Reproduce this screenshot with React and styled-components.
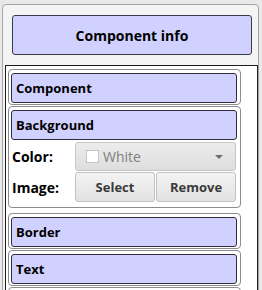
import React from 'react';
import styled, { createGlobalStyle } from 'styled-components';

const GlobalStyle = createGlobalStyle`
  html, body {
    margin: 0;
    padding: 0;
    height: 290px;
    overflow: hidden;
    background: #e9e9e9;
    font-family: "Open Sans", "Noto Sans", "DejaVu Sans", sans-serif;
  }
`;

const Screen = styled.div`
  padding: 4px 0 0 2px;
  height: 286px;
  overflow: hidden;
`;

const Panel = styled.div`
  width: 257px;
  height: 300px;
  box-sizing: border-box;
  border: 1px solid #a4a4a4;
  border-radius: 4px 4px 0 0;
  background: #f4f4f4;
  padding: 10px 0 0 2px;
`;

const TitleBox = styled.div`
  margin-left: 7px;
  width: 240px;
  height: 40px;
  box-sizing: border-box;
  border: 1px solid #3a3a4a;
  border-radius: 3px;
  background: #d1d1ff;
  display: flex;
  align-items: center;
  justify-content: center;
  font-weight: 700;
  font-size: 14px;
  color: #000;
`;

const ScrollBox = styled.div`
  margin-top: 10px;
  width: 253px;
  height: 240px;
  box-sizing: border-box;
  border: 1px solid #1e1e1e;
  background: #fff;
  padding: 3px 0 0 2px;
  display: flex;
  flex-direction: column;
  gap: 1px;
`;

const Section = styled.div`
  width: 233px;
  box-sizing: border-box;
  border: 1px solid #8c8c8c;
  border-radius: 4px;
  padding: 3px 3px ${props => (props.open ? 5 : 1)}px 2px;
  margin-bottom: ${props => (props.open ? 4 : 0)}px;
`;

const SectionHeader = styled.div`
  height: 30px;
  box-sizing: border-box;
  border: 1px solid #2e2e3e;
  border-radius: 3px;
  background: #d1d1ff;
  display: flex;
  align-items: center;
  padding-left: 4px;
  font-weight: 700;
  font-size: 13px;
  color: #000;
`;

const Form = styled.div`
  display: grid;
  grid-template-columns: 64px 161px;
  row-gap: 1px;
  margin-top: 2px;
  align-items: center;
`;

const Label = styled.div`
  font-weight: 700;
  font-size: 14px;
  color: #000;
  padding-left: 1px;
`;

const Combo = styled.div`
  height: 29px;
  box-sizing: border-box;
  border: 1px solid #c6c6c6;
  border-radius: 3px;
  background: linear-gradient(#ececec, #dedede);
  display: flex;
  align-items: center;
  padding: 0 12px 0 10px;
  font-size: 14px;
  color: #808080;
`;

const Swatch = styled.span`
  width: 13px;
  height: 13px;
  box-sizing: border-box;
  border: 1px solid #c4c4c4;
  background: ${props => props.color};
  margin-right: 4px;
`;

const ComboText = styled.span`
  flex: 1;
`;

const Caret = styled.span`
  width: 0;
  height: 0;
  border-left: 4px solid transparent;
  border-right: 4px solid transparent;
  border-top: 4px solid #6e6e6e;
`;

const ButtonRow = styled.div`
  display: flex;
  gap: 1px;
`;

const Button = styled.div`
  flex: 1;
  height: 30px;
  box-sizing: border-box;
  border: 1px solid #c2c2c2;
  border-radius: 3px;
  background: linear-gradient(#f3f3f3, #e2e2e2);
  display: flex;
  align-items: center;
  justify-content: center;
  font-weight: 700;
  font-size: 13px;
  color: #3a3a3a;
`;

// the last entry is the next section, scrolled out of view below the fold
const sections = ['Component', 'Background', 'Border', 'Text', ''];

export default function App() {
  return (
    <>
      <GlobalStyle />
      <Screen>
        <Panel>
          <TitleBox>Component info</TitleBox>
          <ScrollBox>
            {sections.map((name, i) => (
              <Section key={i} open={name === 'Background'}>
                <SectionHeader>{name}</SectionHeader>
                {name === 'Background' && (
                  <Form>
                    <Label>Color:</Label>
                    <Combo>
                      <Swatch color="#fff" />
                      <ComboText>White</ComboText>
                      <Caret />
                    </Combo>
                    <Label>Image:</Label>
                    <ButtonRow>
                      <Button>Select</Button>
                      <Button>Remove</Button>
                    </ButtonRow>
                  </Form>
                )}
              </Section>
            ))}
          </ScrollBox>
        </Panel>
      </Screen>
    </>
  );
}
